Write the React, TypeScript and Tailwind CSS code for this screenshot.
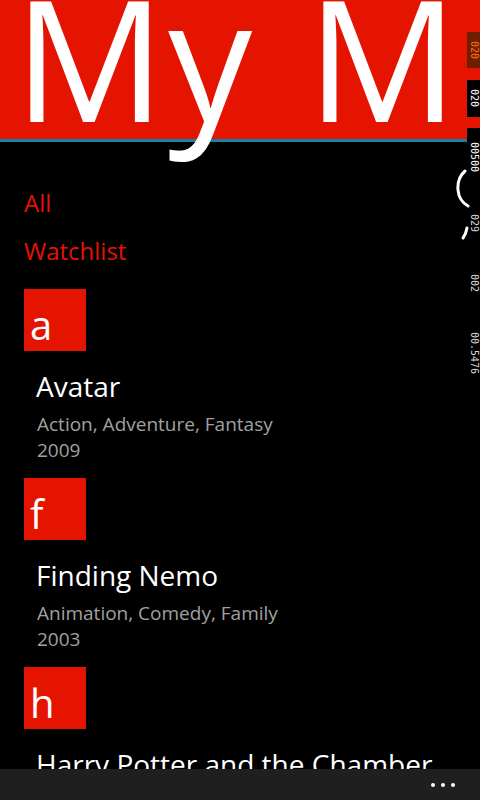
const counters = [
  { text: "020", cls: "mt-[32px] h-[36px] bg-[#6e1f00] text-[#ff6a1a]" },
  { text: "020", cls: "mt-[12px] h-[37px] bg-black text-white" },
  { text: "00500", cls: "mt-[11px] h-[59px] bg-black text-white" },
  { text: "029", cls: "mt-[20px] h-[33px] bg-black text-[#d8d8d8]" },
  { text: "002", cls: "mt-[27px] h-[33px] bg-black text-[#d8d8d8]" },
  { text: "00.5476", cls: "mt-[20px] h-[67px] bg-black text-[#d8d8d8]" },
];

const groups = [
  { letter: "a", title: "Avatar", genres: "Action, Adventure, Fantasy", year: "2009" },
  { letter: "f", title: "Finding Nemo", genres: "Animation, Comedy, Family", year: "2003" },
  {
    letter: "h",
    title: "Harry Potter and the Chamber of Secrets",
    genres: "Adventure, Family, Fantasy",
    year: "2002",
  },
];

function FrameCounters() {
  return (
    <div className="absolute right-0 top-0 flex w-[13px] flex-col items-stretch">
      {counters.map((c, i) => (
        <div
          key={i}
          className={`${c.cls} flex items-center justify-center font-['DejaVu_Sans_Mono',monospace] text-[10px] leading-none [writing-mode:vertical-rl]`}
        >
          {c.text}
        </div>
      ))}
    </div>
  );
}

export default function App() {
  return (
    <div className="relative h-[800px] w-[480px] overflow-hidden bg-black font-['Open_Sans',sans-serif] text-white">
      <header className="h-[139px] bg-[#e51400]">
        <div className="w-[466px] overflow-x-clip whitespace-nowrap pl-[14px] text-[168px] font-normal leading-[114px] tracking-[3px] [word-spacing:5px]">
          My Movies
        </div>
      </header>
      <div className="h-[3px] bg-[#1583a6]" />

      <main className="pl-[24px] pt-[45px]">
        <nav className="flex flex-col gap-[16px] text-[24px] leading-[32px] text-[#e51400]">
          <span>All</span>
          <span>Watchlist</span>
        </nav>

        <ul className="mt-[22px]">
          {groups.map((g) => (
            <li key={g.letter} className="pb-[15px]">
              <div className="flex h-[62px] w-[62px] items-end bg-[#e51400] pb-[6px] pl-[6px] text-[40px] leading-[40px]">
                {g.letter}
              </div>
              <div className="w-[409px] overflow-hidden whitespace-nowrap pl-[12px]">
                <div className="mt-[17px] text-[28px] leading-[36px]">{g.title}</div>
                <div className="mt-[7px] pl-px text-[19px] leading-[26px] text-[#a0a0a0]">
                  <div>{g.genres}</div>
                  <div>{g.year}</div>
                </div>
              </div>
            </li>
          ))}
        </ul>
      </main>

      <FrameCounters />

      <svg className="absolute left-[454px] top-[168px]" width="16" height="74" viewBox="0 0 16 74">
        <path d="M11 3 Q3 10 4 22 Q5 33 14 38" fill="none" stroke="#fff" strokeWidth="3" strokeLinecap="round" />
        <path d="M13 60 Q12 66 9 70" fill="none" stroke="#fff" strokeWidth="3" strokeLinecap="round" />
      </svg>

      <div className="absolute bottom-0 left-0 flex h-[31px] w-full items-center justify-end gap-[6px] bg-[#1f1f1f] pr-[25px]">
        <span className="h-[4px] w-[4px] rounded-full bg-white" />
        <span className="h-[4px] w-[4px] rounded-full bg-white" />
        <span className="h-[4px] w-[4px] rounded-full bg-white" />
      </div>
    </div>
  );
}
